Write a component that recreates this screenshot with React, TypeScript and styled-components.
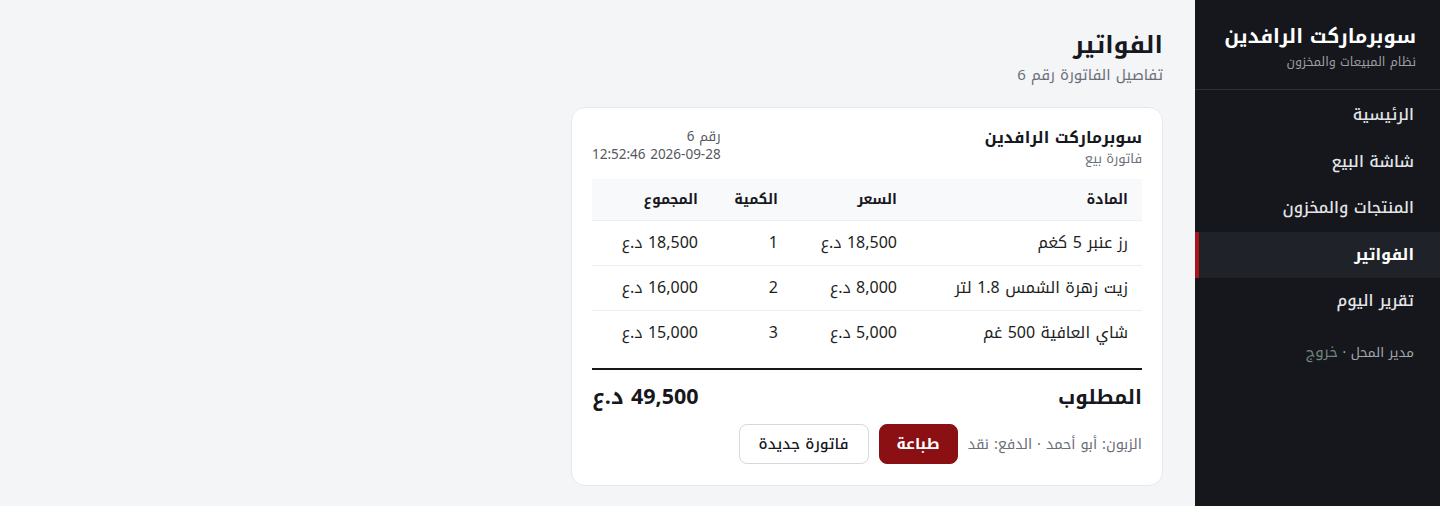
import React from "react";
import styled, { createGlobalStyle } from "styled-components";

const Global = createGlobalStyle`
  html, body { margin: 0; padding: 0; }
  body {
    font-family: "Noto Kufi Arabic", "Noto Sans", sans-serif;
    background: #f4f5f7;
    color: #16181d;
  }
  * { box-sizing: border-box; }
`;

const Shell = styled.div`
  direction: rtl;
  display: flex;
  height: 506px;
`;

const Sidebar = styled.aside`
  width: 245px;
  flex-shrink: 0;
  background: #15171c;
  color: #e9eaec;
  display: flex;
  flex-direction: column;
`;

const Brand = styled.div`
  padding: 23px 24px 16px;
  border-bottom: 1px solid #2c2f36;
`;

const BrandTitle = styled.div`
  font-size: 19.5px;
  font-weight: 700;
  color: #ffffff;
  line-height: 28px;
`;

const BrandSub = styled.div`
  font-size: 12.5px;
  color: #9a9ea6;
  line-height: 22px;
`;

const Nav = styled.nav`
  display: flex;
  flex-direction: column;
  padding-top: 2px;
`;

const NavItem = styled.a<{ $active?: boolean }>`
  display: block;
  height: 46.5px;
  line-height: 46px;
  padding: 0 26px 0 24px;
  font-size: 16px;
  font-weight: ${(p) => (p.$active ? 700 : 500)};
  color: ${(p) => (p.$active ? "#ffffff" : "#e4e5e8")};
  background: ${(p) => (p.$active ? "#1f2229" : "transparent")};
  border-left: 4px solid ${(p) => (p.$active ? "#a8161c" : "transparent")};
  text-decoration: none;
`;

const UserLine = styled.div`
  padding: 15px 26px 0 24px;
  font-size: 13.5px;
  color: #a3a7ae;
  line-height: 24px;
`;

const Logout = styled.span`
  color: #6f867c;
  font-size: 15px;
`;

const Main = styled.main`
  flex: 1;
  padding: 26px 32px 20px;
  display: flex;
  flex-direction: column;
  align-items: flex-start;
`;

const PageTitle = styled.h1`
  margin: 0;
  font-size: 24px;
  font-weight: 700;
  line-height: 38px;
  color: #16181d;
`;

const PageSub = styled.div`
  font-size: 15px;
  color: #6b6f77;
  line-height: 22px;
  margin-bottom: 21px;
`;

const Card = styled.section`
  width: 592px;
  background: #ffffff;
  border: 1px solid #e6e8ec;
  border-radius: 14px;
  padding: 18px 20px 21px;
`;

const CardHead = styled.div`
  display: flex;
  justify-content: space-between;
  align-items: flex-start;
  margin-bottom: 10px;
`;

const StoreName = styled.div`
  font-size: 16px;
  font-weight: 700;
  line-height: 22px;
  padding-top: 1px;
`;

const Muted = styled.div`
  font-size: 13px;
  color: #6b6f77;
  line-height: 20px;
`;

const MetaBlock = styled.div`
  font-size: 13.5px;
  color: #55595f;
  line-height: 18px;
  padding-top: 2px;
`;

const Table = styled.table`
  width: 100%;
  border-collapse: collapse;
  font-size: 16px;
`;

const Th = styled.th<{ $w?: number }>`
  text-align: right;
  font-size: 14px;
  font-weight: 700;
  background: #f8f9fb;
  height: 41px;
  padding: 0 14px;
  border-bottom: 1px solid #eceef1;
  width: ${(p) => (p.$w ? `${p.$w}px` : "auto")};
`;

const Td = styled.td`
  text-align: right;
  height: 45px;
  padding: 0 14px;
  border-bottom: 1px solid #eceef1;
  color: #1d1f24;
`;

const LastRow = styled.tr`
  & > td { border-bottom: none; }
`;

const TotalRow = styled.div`
  margin-top: 13px;
  border-top: 2px solid #16181d;
  display: flex;
  justify-content: space-between;
  align-items: center;
  padding-top: 12px;
  font-size: 20px;
  font-weight: 700;
  line-height: 30px;
`;

const Amount = styled.span`
  font-size: 21.5px;
`;

const Footer = styled.div`
  display: flex;
  align-items: center;
  gap: 10px;
  margin-top: 12px;
`;

const FooterText = styled.div`
  font-size: 14.5px;
  color: #6b6f77;
`;

const Button = styled.button<{ $primary?: boolean }>`
  font-family: inherit;
  font-size: 15px;
  font-weight: ${(p) => (p.$primary ? 700 : 500)};
  height: 40px;
  padding: 0 ${(p) => (p.$primary ? 17 : 19)}px;
  border-radius: 8px;
  cursor: pointer;
  background: ${(p) => (p.$primary ? "#8b1014" : "#ffffff")};
  color: ${(p) => (p.$primary ? "#ffffff" : "#16181d")};
  border: 1px solid ${(p) => (p.$primary ? "#8b1014" : "#d6d8dc")};
`;

const rows = [
  { name: "رز عنبر 5 كغم", price: "18,500 د.ع", qty: "1", total: "18,500 د.ع" },
  { name: "زيت زهرة الشمس 1.8 لتر", price: "8,000 د.ع", qty: "2", total: "16,000 د.ع" },
  { name: "شاي العافية 500 غم", price: "5,000 د.ع", qty: "3", total: "15,000 د.ع" },
];

const nav = ["الرئيسية", "شاشة البيع", "المنتجات والمخزون", "الفواتير", "تقرير اليوم"];

export default function App() {
  return (
    <>
      <Global />
      <Shell>
        <Sidebar>
          <Brand>
            <BrandTitle>سوبرماركت الرافدين</BrandTitle>
            <BrandSub>نظام المبيعات والمخزون</BrandSub>
          </Brand>
          <Nav>
            {nav.map((n) => (
              <NavItem key={n} href="#" $active={n === "الفواتير"}>
                {n}
              </NavItem>
            ))}
          </Nav>
          <UserLine>
            مدير المحل · <Logout>خروج</Logout>
          </UserLine>
        </Sidebar>
        <Main>
          <PageTitle>الفواتير</PageTitle>
          <PageSub>تفاصيل الفاتورة رقم 6</PageSub>
          <Card>
            <CardHead>
              <div>
                <StoreName>سوبرماركت الرافدين</StoreName>
                <Muted>فاتورة بيع</Muted>
              </div>
              <MetaBlock>
                <div>رقم 6</div>
                <div>2026-09-28 12:52:46</div>
              </MetaBlock>
            </CardHead>
            <Table>
              <thead>
                <tr>
                  <Th>المادة</Th>
                  <Th $w={119}>السعر</Th>
                  <Th $w={80}>الكمية</Th>
                  <Th $w={120}>المجموع</Th>
                </tr>
              </thead>
              <tbody>
                {rows.map((r, i) => {
                  const cells = (
                    <>
                      <Td>{r.name}</Td>
                      <Td>{r.price}</Td>
                      <Td>{r.qty}</Td>
                      <Td>{r.total}</Td>
                    </>
                  );
                  return i === rows.length - 1 ? (
                    <LastRow key={r.name}>{cells}</LastRow>
                  ) : (
                    <tr key={r.name}>{cells}</tr>
                  );
                })}
              </tbody>
            </Table>
            <TotalRow>
              <span>المطلوب</span>
              <Amount>49,500 د.ع</Amount>
            </TotalRow>
            <Footer>
              <FooterText>الزبون: أبو أحمد · الدفع: نقد</FooterText>
              <Button $primary>طباعة</Button>
              <Button>فاتورة جديدة</Button>
            </Footer>
          </Card>
        </Main>
      </Shell>
    </>
  );
}
